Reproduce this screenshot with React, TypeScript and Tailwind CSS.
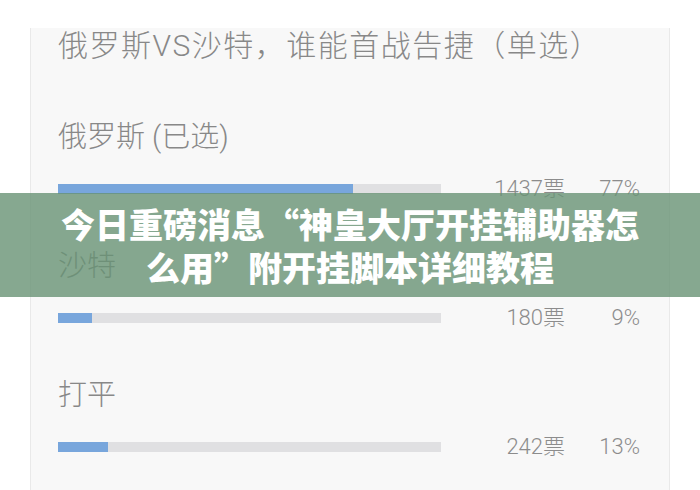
const options = [
  { name: "俄罗斯 (已选)", votes: 1437, percent: 77 },
  { name: "沙特", votes: 180, percent: 9 },
  { name: "打平", votes: 242, percent: 13 },
];

export default function App() {
  return (
    <div className="relative h-[490px] w-[700px] overflow-hidden bg-white font-['Roboto','Noto_Sans_CJK_SC',sans-serif]">
      <div className="ml-[30px] h-full w-[640px] border-x border-[#e9e9e9] bg-[#f8f8f8] pl-[27px] text-[#888888]">
        <div className="mt-[28px] h-9 text-[30px] font-light leading-9 tracking-[1.5px]">俄罗斯VS沙特，谁能首战告捷（单选）</div>

        {options.map((option, i) => (
          <div key={option.name} className={i === 0 ? "mt-[55px]" : "mt-[47px]"}>
            <div className="h-9 text-[29px] font-light leading-9">{option.name}</div>
            <div className="mt-[22px] flex h-6 items-center">
              <div className="h-[10px] w-[383px] bg-[#e0e0e2]">
                <div className="h-full bg-[#78a6dc]" style={{ width: `${option.percent}%` }} />
              </div>
              <div className="w-[124px] text-right text-[22px] font-light leading-6 text-[#8c8c8c]">{option.votes}票</div>
              <div className="w-[75px] text-right text-[22px] font-light leading-6 text-[#8c8c8c]">{option.percent}%</div>
            </div>
          </div>
        ))}
      </div>

      <div className="absolute left-0 top-[193px] flex h-[104px] w-full flex-col items-center justify-center bg-[rgba(104,146,116,0.8)] font-['Noto_Sans_CJK_SC',sans-serif] text-[34px] font-black leading-[43px] text-white">
        <span>今日重磅消息“神皇大厅开挂辅助器怎</span>
        <span>么用”附开挂脚本详细教程</span>
      </div>
    </div>
  );
}
